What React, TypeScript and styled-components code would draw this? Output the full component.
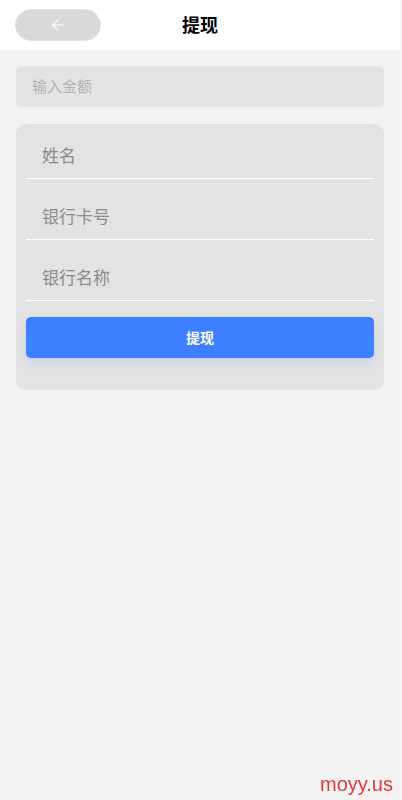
import React from "react";
import styled, { createGlobalStyle } from "styled-components";
import { ArrowLeft } from "lucide-react";

const GlobalStyle = createGlobalStyle`
  html, body {
    margin: 0;
    padding: 0;
    background: #f7f7f7;
  }
  * {
    box-sizing: border-box;
  }
  body {
    font-family: "Noto Sans CJK SC", "Noto Sans", sans-serif;
  }
`;

export default function App() {
  return (
    <>
      <GlobalStyle />
      <Page>
        <Header>
          <BackButton type="button">
            <ArrowLeft size={18} strokeWidth={1.6} color="#ffffff" />
          </BackButton>
          <Title>提现</Title>
        </Header>
        <Content>
          <AmountInput placeholder="输入金额" />
          <FormCard>
            <Field placeholder="姓名" />
            <Field placeholder="银行卡号" />
            <Field placeholder="银行名称" />
            <SubmitButton type="button">提现</SubmitButton>
          </FormCard>
        </Content>
      </Page>
      <Watermark>moyy.us</Watermark>
    </>
  );
}

const Page = styled.div`
  width: 400px;
  min-height: 800px;
  background: #f2f2f2;
`;

const Header = styled.div`
  position: relative;
  height: 50px;
  background: #ffffff;
  display: flex;
  align-items: center;
  justify-content: center;
`;

const BackButton = styled.button`
  position: absolute;
  left: 15px;
  top: 9px;
  width: 86px;
  height: 32px;
  border-radius: 16px;
  border: 1px solid #e2e2e2;
  background: #d9d9d9;
  display: flex;
  align-items: center;
  justify-content: center;
  padding: 0;
`;

const Title = styled.div`
  font-size: 18px;
  font-weight: 700;
  line-height: 24px;
  color: #000000;
  margin-bottom: 3px;
`;

const Content = styled.div`
  padding: 16px 16px;
  display: flex;
  flex-direction: column;
  gap: 17px;
`;

const AmountInput = styled.input`
  height: 41px;
  border: none;
  outline: none;
  border-radius: 5px;
  background: #e3e3e3;
  padding: 0 16px 2px;
  font-family: inherit;
  font-size: 15px;
  color: #333;

  &::placeholder {
    color: #b3b3b3;
  }
`;

const FormCard = styled.div`
  background: #e3e3e3;
  border-radius: 10px;
  padding: 10px 10px 32px;
  display: flex;
  flex-direction: column;
  gap: 16px;
`;

const Field = styled.input`
  height: 45px;
  border: none;
  border-bottom: 1px solid #ffffff;
  outline: none;
  background: transparent;
  padding: 0 16px 3px;
  font-family: inherit;
  font-size: 17px;
  color: #333;

  &::placeholder {
    color: #8c8c8c;
  }
`;

const SubmitButton = styled.button`
  height: 41px;
  border: none;
  border-radius: 5px;
  background: #3d7fff;
  color: #ffffff;
  font-family: inherit;
  font-size: 14px;
  font-weight: 700;
  padding: 0 0 2px;
  box-shadow: 0 4px 10px rgba(61, 127, 255, 0.18);
`;

const Watermark = styled.div`
  position: fixed;
  right: 9px;
  bottom: 4px;
  font-family: "Liberation Sans", Arial, sans-serif;
  font-size: 20px;
  color: #e0393e;
`;
